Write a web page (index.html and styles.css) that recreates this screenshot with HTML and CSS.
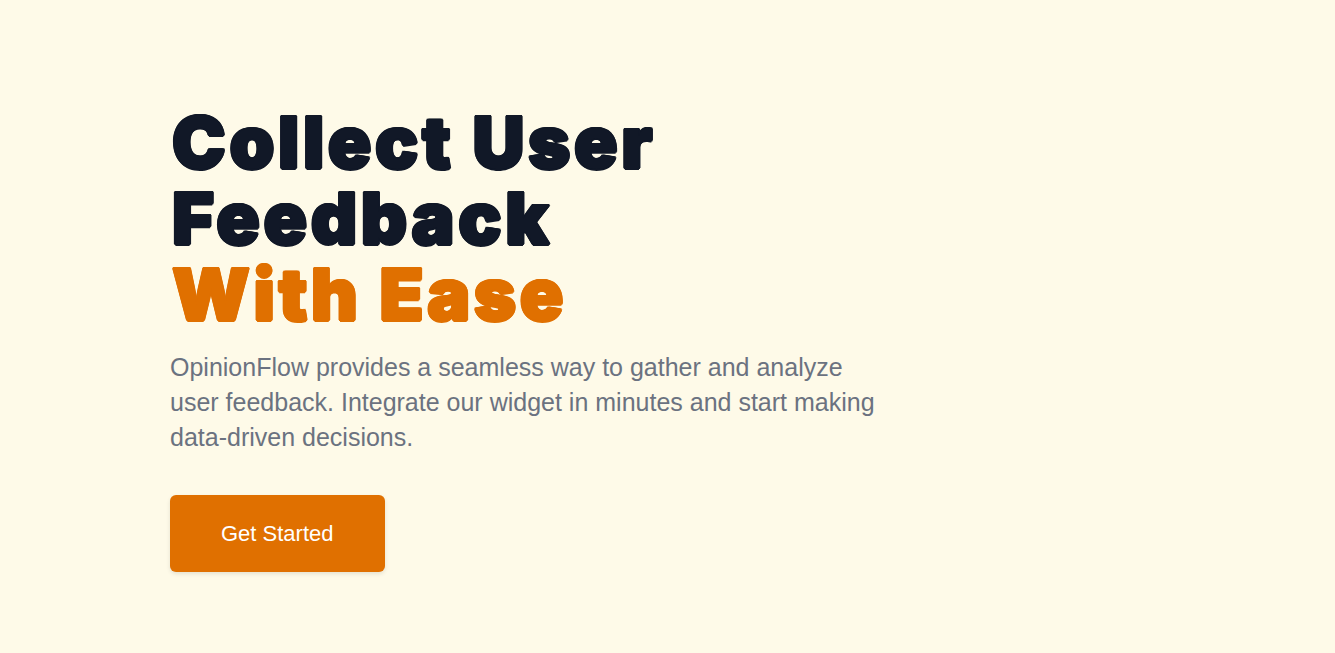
FILE: index.html
```html
<!DOCTYPE html>
<html lang="en">
<head>
<meta charset="utf-8">
<title>OpinionFlow</title>
<link rel="stylesheet" href="styles.css">
</head>
<body>
<main class="hero">
  <div class="hero-content">
    <h1 class="hero-title">Collect User<br>Feedback<br><span class="accent">With Ease</span></h1>
    <p class="hero-text">OpinionFlow provides a seamless way to gather and analyze user feedback. Integrate our widget in minutes and start making data-driven decisions.</p>
    <a class="btn-primary" href="#">Get Started</a>
  </div>
</main>
</body>
</html>
```

FILE: styles.css
```css
* { box-sizing: border-box; }
html, body {
  margin: 0;
  padding: 0;
  height: 100%;
}
body {
  background: #fefae8;
  font-family: "Liberation Sans", Arial, sans-serif;
}
.hero {
  min-height: 653px;
  padding: 104px 170px 0;
}
.hero-content {
  display: flex;
  flex-direction: column;
  align-items: flex-start;
}
.hero-title {
  margin: 0;
  padding-left: 2px;
  font-family: "Inter", "Liberation Sans", Arial, sans-serif;
  font-size: 72px;
  line-height: 76px;
  font-weight: 900;
  color: #111827;
  letter-spacing: 3.6px;
  text-shadow:
    1.5px 0 0, -1.5px 0 0, 0 1.5px 0, 0 -1.5px 0,
    1px 1px 0, -1px -1px 0, 1px -1px 0, -1px 1px 0;
}
.accent {
  color: #e07000;
}
.hero-text {
  margin: 18px 0 0;
  max-width: 712px;
  font-size: 25px;
  line-height: 35px;
  color: #6b7280;
}
.btn-primary {
  margin-top: 40px;
  display: inline-block;
  background: #e07000;
  color: #ffffff;
  text-decoration: none;
  font-size: 22px;
  line-height: 29px;
  padding: 24px 51px;
  border-radius: 6px;
  box-shadow: 0 2px 4px rgba(0,0,0,0.1);
}
```
